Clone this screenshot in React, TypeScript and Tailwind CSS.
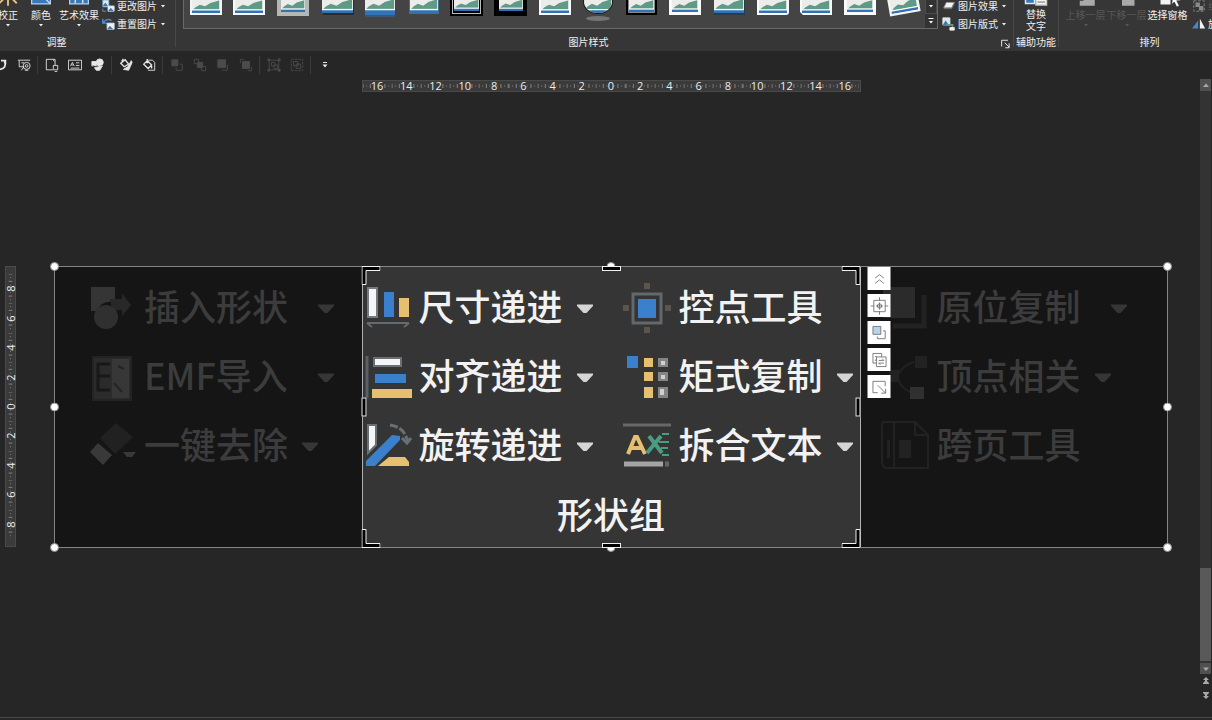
import React from "react";

interface IconProps {
  children: React.ReactNode;
  className?: string;
}

const SmallIcon: React.FC<IconProps> = ({ children, className = "size-4" }) => (
  <svg viewBox="0 0 16 16" fill="none" stroke="currentColor" className={`shrink-0 ${className}`} aria-hidden="true">
    {children}
  </svg>
);

const BigIcon: React.FC<IconProps> = ({ children }) => (
  <svg viewBox="0 0 48 48" className="size-12 shrink-0 overflow-visible" aria-hidden="true">
    {children}
  </svg>
);

const Caret = () => (
  <svg viewBox="0 0 8 8" className="size-2 shrink-0" fill="currentColor" aria-hidden="true">
    <path d="M2 3h4L4 5.5z" />
  </svg>
);

/* ---------- ribbon ---------- */

interface GroupProps {
  label: string;
  className: string;
  labelClass?: string;
  children: React.ReactNode;
}

const RibbonGroup: React.FC<GroupProps> = ({ label, className, labelClass = "", children }) => (
  <section className={`flex flex-col justify-end ${className}`}>
    {children}
    <h2 className={`text-center leading-[18px] ${labelClass}`}>{label}</h2>
  </section>
);

const Divider = () => <div className="mb-1 w-px shrink-0 bg-[#484848]" />;

interface RibbonButtonProps {
  icon: React.ReactNode;
  label: string;
  disabled?: boolean;
  caret?: boolean;
  className?: string;
}

const LargeButton: React.FC<RibbonButtonProps> = ({ icon, label, disabled, caret = true, className = "" }) => (
  <button
    type="button"
    disabled={disabled}
    className={`flex shrink-0 flex-col items-center whitespace-nowrap pb-1 leading-3 disabled:text-[#565656] ${className}`}
  >
    {icon}
    <span className="mt-0.5">{label}</span>
    <span className="h-2">{caret && <Caret />}</span>
  </button>
);

const RowButton: React.FC<RibbonButtonProps> = ({ icon, label, caret = true, disabled, className = "" }) => (
  <button
    type="button"
    disabled={disabled}
    className={`flex items-center gap-0.5 whitespace-nowrap leading-[18px] disabled:text-[#565656] ${className}`}
  >
    {icon}
    <span>{label}</span>
    {caret && <Caret />}
  </button>
);

interface SceneProps {
  x: number;
  y: number;
  w: number;
  h: number;
}

const Scene: React.FC<SceneProps> = ({ x, y, w, h }) => (
  <svg x={x} y={y} width={w} height={h} viewBox="0 0 32 24" preserveAspectRatio="none">
    <path fill="#ececea" d="M0 0h32v24H0z" />
    <path fill="#5f9a86" d="M1 20 4 17 9 14 15 16 21 12 31 9V20z" />
    <path fill="#fff" d="M0 19.500h32v2H0z" />
    <path fill="#3273b8" d="M0 21h32v3H0z" />
  </svg>
);

const pictureStyles: { name: string; art: React.ReactNode }[] = [
  { name: "简单框架，白色", art: <><path fill="#f4f4f4" d="M2 6h32v24H2z" /><Scene x={4} y={8} w={28} h={20} /></> },
  { name: "棱台亚光，白色", art: <><path fill="#f8f8f8" d="M2 6h32v24H2z" /><Scene x={4} y={8} w={28} h={20} /></> },
  { name: "金属框架", art: <><path fill="#b4b7b3" d="M2 6h32v25H2z" /><Scene x={6} y={8} w={24} h={19} /></> },
  { name: "矩形投影", art: <><path fill="#2b2b2b" d="M4 8h31v22H4z" /><Scene x={3} y={6} w={31} h={22} /></> },
  { name: "映像圆角矩形", art: <><path fill="#3d5570" d="M3 28h30v4H3z" /><path fill="#3273b8" d="M3 26h30v4H3z" /><Scene x={3} y={6} w={30} h={22} /></> },
  { name: "柔化边缘矩形", art: <><path fill="#486c8f" d="M3 8h30v21H3z" /><Scene x={4} y={6} w={28} h={22} /></> },
  { name: "双框架，黑色", art: <><path fill="#000" d="M1 4h33v27H1z" /><path fill="#bbb" d="M3 6h29v23H3z" /><path fill="#000" d="M4 7h27v21H4z" /><Scene x={5} y={8} w={25} h={18} /></> },
  { name: "厚重亚光，黑色", art: <><path fill="#000" d="M1 4h33v27H1z" /><Scene x={6} y={8} w={24} h={18} /></> },
  { name: "简单框架，细白", art: <><path fill="#fafafa" d="M2 6h32v24H2z" /><Scene x={4} y={8} w={28} h={20} /></> },
  {
    name: "棱台形椭圆，黑色",
    art: (
      <>
        <clipPath id="oval"><ellipse cx="18" cy="17" rx="14" ry="11" /></clipPath>
        <ellipse cx="18" cy="17" rx="15" ry="12" fill="#1b1b1b" />
        <g clipPath="url(#oval)"><Scene x={4} y={6} w={28} h={22} /></g>
        <ellipse cx="18" cy="33.500" rx="12" ry="2.500" fill="#757575" />
      </>
    ),
  },
  { name: "复杂框架，黑色", art: <><path fill="#000" d="M2 5h31v25H2z" /><path stroke="#888" fill="none" d="M4.500 7.500h26v20h-26z" /><Scene x={5} y={8} w={25} h={19} /></> },
  { name: "中等复杂框架", art: <><path fill="#fafafa" d="M2 6h32v24H2z" /><Scene x={5} y={8} w={26} h={19} /></> },
  { name: "居中矩形阴影", art: <><path fill="#2d3b49" d="M3 8h31v22H3z" /><Scene x={3} y={6} w={30} h={22} /></> },
  { name: "圆形对角，白色", art: <><path fill="#fafafa" d="M2 6h32v21q0 3-3 3H2z" /><Scene x={4} y={8} w={28} h={20} /></> },
  { name: "剪去对角，白色", art: <><path fill="#fafafa" d="M2 6h32v24H5l-3-3z" /><Scene x={4} y={8} w={28} h={20} /></> },
  { name: "中等复杂框架，白色", art: <><path fill="#fafafa" d="M2 6h32v24H2z" /><Scene x={5} y={8} w={26} h={19} /></> },
  { name: "旋转，白色", art: <g transform="rotate(-10 18 18)"><path fill="#f4f4f4" d="M3 5h31v24H3z" /><Scene x={5} y={7} w={27} h={20} /></g> },
];

const Ribbon = () => (
  <header className="flex h-[51px] shrink-0 overflow-hidden bg-[#363636] text-[10px] text-[#f0f0f0]">
    <RibbonGroup label="调整" className="-ml-[62px] w-[237px] shrink-0">
      <div className="flex items-end justify-end">
        <LargeButton
          label="校正"
          className="w-[34px]"
          icon={
            <SmallIcon className="size-5">
              <path stroke="#e8c27a" strokeWidth="1.500" d="M8 10v5M4 10l-3 3M12 10l3 3M1 7h3M12 7h3" />
              <circle cx="8" cy="7" r="3" stroke="#e8c27a" />
            </SmallIcon>
          }
        />
        <LargeButton
          label="颜色"
          className="w-8"
          icon={
            <SmallIcon className="size-5">
              <path fill="#3878bb" stroke="#b9d2ea" d="M.5 1.500h15v12H.5z" />
              <path stroke="#cde0f2" d="m8 6 7 7" />
            </SmallIcon>
          }
        />
        <LargeButton
          label="艺术效果"
          className="w-11"
          icon={
            <SmallIcon className="size-5">
              <path fill="#3878bb" stroke="#b9d2ea" d="M.5 1.500h15v12H.5z" />
              <path stroke="#e8f0f8" d="M5 1v12M11 1v12M1 9h14" />
            </SmallIcon>
          }
        />
        <div className="mr-1.5 flex w-[68px] flex-col">
          <RowButton
            label="更改图片"
            icon={
              <SmallIcon className="w-3.5">
                <path fill="#dfeee9" stroke="#6e9fc9" d="M2 1h7v8H2z" />
                <path fill="#f0f0f0" stroke="#ddd" d="M8 8h7v6H8z" />
                <path fill="#3878bb" stroke="none" d="m8 14 3-4 4 4zM2 8l3-4 3 4z" />
                <path stroke="#5b9bd5" d="M2 11v3h4" />
              </SmallIcon>
            }
          />
          <RowButton
            label="重置图片"
            icon={
              <SmallIcon className="w-3.5">
                <path stroke="#4a90d6" strokeWidth="1.500" d="M2 2v5h5M3 6q4-5 9-2" />
                <path fill="#f0f0f0" stroke="#ddd" d="M7 7h8v7H7z" />
                <path fill="#3878bb" stroke="none" d="m7 14 3-4 4 4z" />
              </SmallIcon>
            }
          />
        </div>
      </div>
    </RibbonGroup>
    <Divider />

    <RibbonGroup label="图片样式" className="relative min-w-0 flex-1" labelClass="pr-3">
      <div className="flex items-end pl-[7px]">
        <div className="mb-1 flex min-w-0 flex-1 border border-[#666b68] bg-[#444444]">
          <div className="flex h-16 min-w-0 flex-1 items-end pb-[7px]">
            {pictureStyles.map((style) => (
              <button key={style.name} type="button" aria-label={style.name} className="flex min-w-0 flex-1 justify-center">
                <svg viewBox="0 0 36 36" className="size-9 shrink-0">
                  {style.art}
                </svg>
              </button>
            ))}
          </div>
          <div className="flex w-3 flex-col justify-end bg-[#333333] text-white">
            <button type="button" aria-label="下一行" className="flex h-4 items-center justify-center border border-[#4c4c4c]">
              <Caret />
            </button>
            <button type="button" aria-label="其他" className="flex h-3.5 items-center justify-center">
              <svg viewBox="0 0 8 8" className="size-2" fill="currentColor">
                <path d="M1.500 1h5v1h-5zM2 4h4L4 6.500z" />
              </svg>
            </button>
          </div>
        </div>
        <div className="flex w-[75px] flex-col pl-1">
          <RowButton
            label="图片效果"
            icon={
              <SmallIcon className="w-3.5">
                <path fill="#f2f2f2" stroke="#9a9a9a" d="M5 4h9l-3 6H2z" />
                <path stroke="#777" d="M2 11h9l3-6" />
              </SmallIcon>
            }
          />
          <RowButton
            label="图片版式"
            icon={
              <SmallIcon className="w-3.5">
                <path fill="#dce8ee" stroke="#eee" d="M1 1h8v8H1z" />
                <path fill="#3878bb" stroke="none" d="m1 9 3-5 4 5z" />
                <path stroke="#5f9a86" strokeWidth="2" d="M5 9h7v3" />
                <path fill="#eee" stroke="#eee" d="M9 12h5v3H9z" />
              </SmallIcon>
            }
          />
        </div>
      </div>
      <button type="button" aria-label="设置图片格式" className="absolute right-0.5 bottom-0.5">
        <SmallIcon className="size-2.5">
          <path strokeWidth="1.500" d="M1 12V2h10M6 6l7 7M13 7v7H7" />
        </SmallIcon>
      </button>
    </RibbonGroup>
    <Divider />

    <RibbonGroup label="辅助功能" className="w-11 shrink-0">
      <button type="button" className="flex flex-col items-center leading-3">
        <SmallIcon className="size-6">
          <path fill="#3878bb" stroke="#dcebf7" d="M1 1h6v12H1z" />
          <path fill="#f5f5f5" stroke="#ccc" d="M8 3h7v11H8z" />
          <path stroke="#999" d="M9 10h5M9 12h5" />
        </SmallIcon>
        <span className="pb-px">
          替换
          <br />
          文字
        </span>
      </button>
    </RibbonGroup>
    <Divider />

    <RibbonGroup label="排列" className="-mr-7 w-[181px] shrink-0">
      <div className="flex items-end pl-1.5">
        <LargeButton
          label="上移一层"
          disabled
          className="w-[41px]"
          icon={<SmallIcon className="size-5"><path fill="#a9a9a9" stroke="none" d="M6 4h9v11H3v-4h3z" /></SmallIcon>}
        />
        <LargeButton
          label="下移一层"
          disabled
          className="w-[41px]"
          icon={<SmallIcon className="size-5"><path fill="#a9a9a9" stroke="none" d="M4 4h10v11H4z" /></SmallIcon>}
        />
        <LargeButton
          label="选择窗格"
          caret={false}
          className="w-[41px]"
          icon={
            <SmallIcon className="size-5 overflow-visible">
              <path fill="#f2f2f2" stroke="none" d="M2 4h8v10H2z" />
              <path fill="#fff" stroke="#333" strokeWidth=".5" d="m12 4 6 7h-3l2 4-2 1-2-4-2 2z" />
            </SmallIcon>
          }
        />
        <div className="flex flex-col pl-1">
          <RowButton
            label="组合"
            disabled
            icon={
              <SmallIcon className="w-3.5">
                <path stroke="#8a8a8a" strokeDasharray="3 2" d="M2 2h12v12H2z" />
                <path fill="#8a8a8a" stroke="none" d="M4 4h5v5H4zM8 8h5v5H8z" />
              </SmallIcon>
            }
          />
          <RowButton
            label="旋转"
            icon={
              <SmallIcon className="w-3.5">
                <path fill="#4a86c0" stroke="none" d="M7 4v9H0z" />
                <path fill="#f2f2f2" stroke="none" d="M9 2v11h6z" />
              </SmallIcon>
            }
          />
        </div>
      </div>
    </RibbonGroup>
  </header>
);

/* ---------- quick access bar ---------- */

interface QuickItem {
  name: string;
  disabled?: boolean;
  art: React.ReactNode;
}

const quickGroups: QuickItem[][] = [
  [
    { name: "恢复", art: <path strokeWidth="2" d="M8 3h5v4M12 4q3 8-6 9" /> },
    { name: "从头开始放映", art: <><path d="M1 2.500h14M2.500 3v7H8M5 5.500h3M5 14l3-4" /><circle cx="11" cy="9" r="4" /><circle cx="11" cy="9" r="1.500" /><path d="M9 14h4" /></> },
  ],
  [
    { name: "页面设置", art: <><path d="M9 13.500H1.500v-12h10V8M9 2l2 2" /><path fill="#262626" d="M9.500 8.500h5v5h-5zM11 15.500h3" /></> },
    { name: "文本框", art: <><path d="M.5 2.500h15v11H.5zM9 5.500h4M9 8.500h4M3 11.500h10M3 9l2-4 2 4M4 8h2" /></> },
    { name: "形状", art: <><circle cx="10" cy="5" r="4" fill="currentColor" /><path fill="currentColor" d="M1 4h5v5H1z" /><path stroke="#262626" d="m2 9 6 2 6-3" /><path fill="currentColor" d="m4 11 9-2-3 5H6z" /></> },
  ],
  [
    { name: "格式刷", art: <><path strokeWidth="1.500" d="M2 6l5-4 4 5-5 3zM5 1 3 4" /><path fill="currentColor" d="m14 3-4 7-5 3 6 1 4-9z" /></> },
    { name: "填充颜色", art: <><path d="M7 2.500h5l2.500 2.500v9H7" /><path strokeWidth="1.500" d="m2 7 4-4 5 5-4 4zM6 1v5M11 9v3" /></> },
  ],
  [
    { name: "置于顶层", disabled: true, art: <><path fill="currentColor" d="M2 2h7v7H2z" /><path d="M11 7h3v7H7v-3" /></> },
    { name: "上移一层", disabled: true, art: <><path d="M1.500 1.500h5v5h-5zM9.500 9.500h5v5h-5z" /><path fill="currentColor" d="M5 5h6v6H5z" /></> },
    { name: "置于底层", disabled: true, art: <><path fill="currentColor" d="M2 2h9v9H2z" /><path d="M13 8v6H7" /></> },
    { name: "下移一层", disabled: true, art: <><path d="M1.500 6V1.500H6M14.500 10v4.500H10" /><path fill="currentColor" d="M4 4h8v8H4z" /></> },
  ],
  [
    { name: "组合", disabled: true, art: <><path d="M2.500 2.500h11v11h-11zM5 5h4v4H5zM8 8h4v4H8z" /><path fill="currentColor" d="M1 1h2v2H1zM13 1h2v2h-2zM1 13h2v2H1zM13 13h2v2h-2z" /></> },
    { name: "取消组合", disabled: true, art: <><path strokeDasharray="3 1" d="M1.500 1.500h13v13h-13z" /><path d="M4 4h5v5H4zM7 7h5v5H7z" /></> },
  ],
];

const QuickBar = () => (
  <nav className="-ml-[11px] flex h-7 shrink-0 items-center text-[#e6e6e6]">
    {quickGroups.map((group, index) => (
      <React.Fragment key={index}>
        {group.map((item) => (
          <button
            key={item.name}
            type="button"
            aria-label={item.name}
            disabled={item.disabled}
            className="flex w-[23px] justify-center disabled:text-[#4b4b4b]"
          >
            <SmallIcon className="size-3.5">{item.art}</SmallIcon>
          </button>
        ))}
        <div className="mx-0.5 h-[18px] w-px bg-[#3d3d3d]" />
      </React.Fragment>
    ))}
    <button type="button" aria-label="自定义快速访问工具栏" className="flex w-[23px] justify-center">
      <svg viewBox="0 0 8 8" className="size-2" fill="currentColor">
        <path d="M2 1h4v1H2zM1.500 3.500h5L4 6.500z" />
      </svg>
    </button>
  </nav>
);

/* ---------- rulers ---------- */

const horizontalMarks = [16, 14, 12, 10, 8, 6, 4, 2, 0, 2, 4, 6, 8, 10, 12, 14, 16];
const verticalMarks = [8, 6, 4, 2, 0, 2, 4, 6, 8];

const HorizontalRuler = () => (
  <div className="mx-auto mt-px flex h-3 w-[499px] border border-[#4a4a4a] bg-[#3a3a3a] font-['Open_Sans',sans-serif] text-[11px] leading-[10px] text-[#eeeeee]">
    {horizontalMarks.map((mark, index) => (
      <div key={index} className="grid flex-1 place-items-center overflow-hidden">
        <svg viewBox="0 0 32 10" preserveAspectRatio="none" className="col-start-1 row-start-1 h-[10px] w-full" stroke="#8a8a8a">
          <path d="M0 3v4M8 3v4M24 3v4M4 4.500v1M12 4.500v1M20 4.500v1M28 4.500v1M32 3v4" />
        </svg>
        <span className="col-start-1 row-start-1 bg-[#3a3a3a]">{mark}</span>
      </div>
    ))}
  </div>
);

const VerticalRuler = () => (
  <div className="mb-px ml-[5px] flex w-[11px] flex-col border border-[#4a4a4a] bg-[#3a3a3a] py-[7px] font-['Open_Sans',sans-serif] text-[11px] leading-[9px] text-[#eeeeee]">
    {verticalMarks.map((mark, index) => (
      <div key={index} className="grid min-h-0 flex-1 place-items-center">
        <svg viewBox="0 0 10 32" preserveAspectRatio="none" className="col-start-1 row-start-1 h-full w-[9px]" stroke="#8a8a8a">
          <path d="M3 0h4M3 8h4M3 24h4M4.500 4h1M4.500 12h1M4.500 20h1M4.500 28h1" />
        </svg>
        <span className="col-start-1 row-start-1 -rotate-90">{mark}</span>
      </div>
    ))}
  </div>
);

/* ---------- picture ---------- */

interface ToolProps {
  label: string;
  icon: React.ReactNode;
  arrow?: "near" | "far";
}

const Tool: React.FC<ToolProps> = ({ label, icon, arrow }) => (
  <div className="flex h-[69px] items-center whitespace-nowrap text-4xl">
    <BigIcon>{icon}</BigIcon>
    <span className="ml-2 pb-2 leading-10">{label}</span>
    {arrow && (
      <svg viewBox="0 0 20 20" className={`size-5 shrink-0 opacity-85 ${arrow === "near" ? "ml-3" : "ml-7"}`} fill="currentColor" aria-hidden="true">
        <path d="M2 5.500h16v1.500L11.500 14h-3L2 7z" />
      </svg>
    )}
  </div>
);

const LeftPanel = () => (
  <div className="overflow-hidden bg-[#151515] pt-[7px] pl-[33px] text-[#3c3c3c]">
    <Tool
      label="插入形状"
      arrow="far"
      icon={
        <>
          <path fill="#353535" d="M3 2h24v15q-14-2-18 9H3z" />
          <path fill="#282828" d="M22 14h12V8l9 12-9 11v-6H24z" />
          <circle cx="18" cy="32" r="12" fill="#303030" />
        </>
      }
    />
    <Tool
      label="EMF导入"
      arrow="far"
      icon={
        <>
          <path fill="#2b2b2b" stroke="#232323" strokeWidth="2" d="M5 3h38v43H5z" />
          <path fill="#373737" d="M24 5h17v39H24z" />
          <path fill="none" stroke="#181818" strokeWidth="3" d="M22 10H10v26h12M10 22h12" />
          <path stroke="#232323" strokeWidth="2" d="m30 12 6 3M26 29l8 9" />
        </>
      }
    />
    <Tool
      label="一键去除"
      arrow="near"
      icon={
        <>
          <path fill="#212121" d="m28 0 17 14-18 17L12 15z" />
          <path fill="#393939" d="m10 20 14 12-9 10L2 29z" />
          <path fill="#393939" d="M35 29h13l-4 5h-5z" />
        </>
      }
    />
  </div>
);

const CropPanel = () => (
  <div className="border-x border-[#b0b0b0] bg-[#353535] pt-[7px] text-[#f2f2f2]">
    <div className="grid grid-cols-[260px_1fr]">
      <Tool
        label="尺寸递进"
        arrow="near"
        icon={
          <>
            <path fill="#f5f5f5" stroke="#747b80" strokeWidth="2" d="M5 3h9v29H5z" />
            <path fill="#3a80cc" d="M21 7h10v25H21z" />
            <path fill="#e7bf70" d="M36 13h10v19H36z" />
            <path fill="none" stroke="#646a6e" strokeWidth="2" d="M4 38h42M4 38l5 4M46 38l-5 4" />
          </>
        }
      />
      <Tool
        label="控点工具"
        icon={
          <>
            <path stroke="#5b554b" strokeWidth="6" d="M24-2v6M24 42v6M0 23h6M42 23h6" />
            <path fill="none" stroke="#62686c" strokeWidth="3" d="M10 9h28v29H10z" />
            <path fill="#3a80cc" d="M15 14h18v19H15z" />
          </>
        }
      />
      <Tool
        label="对齐递进"
        arrow="near"
        icon={
          <>
            <path stroke="#5a6064" strokeWidth="3" d="M4 2v42" />
            <path fill="#f5f5f5" stroke="#687077" strokeWidth="2" d="M11 4h27v8H11z" />
            <path fill="#3a80cc" d="M12 20h31v9H12z" />
            <path fill="#e7bf70" d="M9 35h40v9H9z" />
          </>
        }
      />
      <Tool
        label="矩式复制"
        arrow="near"
        icon={
          <>
            <path fill="#3a80cc" d="M4 2h11v12H4z" />
            <path fill="#e7bf70" d="M21 4h9v9h-9zM21 18h9v9h-9zM21 33h9v11h-9z" />
            <path fill="#858585" d="M35 4h10v9H35zM35 18h10v9H35zM35 33h10v11H35z" />
            <path fill="#d0d0d0" d="M38 7h4v4h-4zM38 21h4v4h-4zM37 35h4v6h-4z" />
          </>
        }
      />
      <Tool
        label="旋转递进"
        arrow="near"
        icon={
          <>
            <path fill="#f5f5f5" stroke="#687077" strokeWidth="2" d="M5 2h8v20l-8 8z" />
            <path fill="#e7bf70" d="m15 43 11-9h16l4 5v4z" />
            <path fill="#3a80cc" d="m29 12 8 1v4L12 43H3v-5z" />
            <path fill="none" stroke="#687077" strokeWidth="3" strokeDasharray="8 2" d="M27 2q15 2 18 18" />
            <path fill="none" stroke="#687077" strokeWidth="3" d="m39 15 5 5 4-5" />
          </>
        }
      />
      <Tool
        label="拆合文本"
        arrow="near"
        icon={
          <>
            <path stroke="#686868" strokeWidth="3" d="M0 2h48" />
            <path fill="none" stroke="#e7bf70" strokeWidth="4" d="m5 31 7-17h2l8 17M9 25h9" />
            <path fill="none" stroke="#4a9c82" strokeWidth="4" d="m26 13 13 17M38 13 24 30" />
            <path stroke="#4a9c82" strokeWidth="2" d="M39 11h7M36 19h10M38 25h7M39 32h7" />
            <path stroke="#a5a5a5" strokeWidth="5" d="M1 41h39" />
            <path stroke="#666" strokeWidth="5" d="M42 41h4" />
          </>
        }
      />
    </div>
    <p className="h-[66px] pt-3 text-center text-4xl leading-10">形状组</p>
  </div>
);

const RightPanel = () => (
  <div className="overflow-hidden bg-[#151515] pt-[7px] pl-5 text-[#3c3c3c]">
    <Tool
      label="原位复制"
      arrow="far"
      icon={
        <>
          <path fill="#2b2b2b" d="M2 2h32v31H2z" />
          <path fill="none" stroke="#222" strokeWidth="5" d="M43 10v31H12" />
        </>
      }
    />
    <Tool
      label="顶点相关"
      arrow="near"
      icon={
        <>
          <path fill="none" stroke="#222" strokeWidth="2" d="M33 8q-12 3-17 15 5 14 17 16" />
          <path fill="#222" d="M34 2h12v12H34zM8 16h10v12H8z" />
          <path fill="#303030" d="M29 33h14v12H29z" />
        </>
      }
    />
    <Tool
      label="跨页工具"
      icon={
        <>
          <path fill="none" stroke="#222" strokeWidth="2" d="M13-1v46M2-1h32l13 13v33H4l-3-4V3zM34-1v13h13" />
          <path fill="#222" d="M18 17h12v18H18zM6 17h3v18H6z" />
        </>
      }
    />
  </div>
);

const roundHandles = [
  "-left-1 -top-1",
  "-left-1 top-1/2 -translate-y-1/2",
  "-left-1 -bottom-1",
  "-right-1 -top-1",
  "-right-1 top-1/2 -translate-y-1/2",
  "-right-1 -bottom-1",
  "left-1/2 -translate-x-1/2 -top-1",
  "left-1/2 -translate-x-1/2 -bottom-1",
];

const cropCorners = [
  "left-0 top-0",
  "right-0 top-0 -scale-x-100",
  "left-0 bottom-0 -scale-y-100",
  "right-0 bottom-0 -scale-100",
];

const cropEdges = [
  "left-1/2 top-0 h-[5px] w-[19px] -translate-x-1/2",
  "left-1/2 bottom-0 h-[5px] w-[19px] -translate-x-1/2",
  "left-0 top-1/2 h-[19px] w-[5px] -translate-y-1/2",
  "right-0 top-1/2 h-[19px] w-[5px] -translate-y-1/2",
];

const floatingTools = [
  { name: "收起", art: <path d="m3 7 5-4 5 4M3 13l5-4 5 4" /> },
  { name: "居中", art: <><path d="M1.500 1.500h13v13h-13zM8-2v4M8 14v4M-2 8h4M14 8h4M8 4v8M4 8h8" /><circle cx="8" cy="8" r="2.500" /></> },
  { name: "叠放次序", art: <><path fill="#b9d3ea" d="M.5.500h9v9h-9z" /><path d="M12 5.500h2.500v9h-9V12" /></> },
  { name: "替换图片", art: <><path d="M5 11.500H.500v-11h10V5M3 4h2M3 9l2-3" /><path fill="#fff" d="M4.500 4.500h11v11h-11zM7 8.500h6l-2-2M13 11.500H7l2 2" /></> },
  { name: "调整大小", art: <path d="M6 14.500H.500v-13h14V7M6 6l9 9M15 10v5h-5" /> },
];

const Picture = () => (
  <div className="relative mx-8 min-w-0 flex-1">
    {roundHandles.map((place) => (
      <div key={place} className={`absolute size-[9px] rounded-full border border-[#8c8c8c] bg-white ${place}`} />
    ))}
    <div className="grid grid-cols-[1fr_499px_1fr] border border-[#858585]">
      <LeftPanel />
      <CropPanel />
      <RightPanel />
    </div>
    {/* crop frame and the tool strip next to it */}
    <div className="absolute inset-y-0 left-1/2 w-[499px] -translate-x-1/2">
      {cropCorners.map((place) => (
        <svg key={place} viewBox="0 0 19 19" className={`absolute size-[19px] ${place}`} fill="#000" stroke="#f0f0f0">
          <path d="M.5.5h18v4h-14v14h-4z" />
        </svg>
      ))}
      {cropEdges.map((place) => (
        <div key={place} className={`absolute border border-[#f0f0f0] bg-black ${place}`} />
      ))}
      <div className="absolute top-px left-full ml-[7px] flex flex-col gap-1">
        {floatingTools.map((tool) => (
          <button key={tool.name} type="button" aria-label={tool.name} className="flex size-[23px] items-center justify-center bg-white text-[#707070]">
            <SmallIcon className="size-3.5 overflow-visible">{tool.art}</SmallIcon>
          </button>
        ))}
      </div>
    </div>
  </div>
);

/* ---------- scroll bar ---------- */

const ScrollBar = () => (
  <div className="ml-auto flex w-3 shrink-0 flex-col pr-px text-[#a8a8a8]">
    <button type="button" aria-label="向上滚动" className="flex h-3 items-center justify-center bg-[#505050]">
      <svg viewBox="0 0 8 8" className="size-2" fill="currentColor"><path d="M1 6h6L4 2.500z" /></svg>
    </button>
    <div className="flex flex-1 flex-col justify-end bg-[#333333] pb-0.5">
      <div className="h-[93px] bg-[#595959]" />
    </div>
    <button type="button" aria-label="向下滚动" className="flex h-[11px] items-center justify-center bg-[#505050]">
      <svg viewBox="0 0 8 8" className="size-2" fill="currentColor"><path d="M1 2.500h6L4 6z" /></svg>
    </button>
    <button type="button" aria-label="上一张幻灯片" className="flex h-3.5 items-center justify-center">
      <svg viewBox="0 0 8 8" className="size-2" fill="currentColor"><path d="m4 0 3 3H5v1l2 2v1H1V6l2-2V3H1z" /></svg>
    </button>
    <button type="button" aria-label="下一张幻灯片" className="mb-[15px] flex h-3.5 items-center justify-center">
      <svg viewBox="0 0 8 8" className="size-2" fill="currentColor"><path d="m4 8 3-3H5V4l2-2V1H1v1l2 2v1H1z" /></svg>
    </button>
  </div>
);

const App: React.FC = () => {
  return (
    <div className="flex h-screen flex-col overflow-hidden bg-[#262626] font-['Noto_Sans_CJK_SC',sans-serif]">
      <Ribbon />
      <QuickBar />
      <main className="flex min-h-0 flex-1">
        <div className="flex min-w-0 flex-1 flex-col">
          <div className="ml-[22px]">
            <HorizontalRuler />
          </div>
          <div className="mt-[174px] flex font-medium">
            <div className="flex w-[22px] shrink-0 font-normal">
              <VerticalRuler />
            </div>
            <Picture />
          </div>
        </div>
        <ScrollBar />
      </main>
      <footer className="mb-0.5 h-px shrink-0 bg-[#484848]" />
    </div>
  );
};

export default App;
